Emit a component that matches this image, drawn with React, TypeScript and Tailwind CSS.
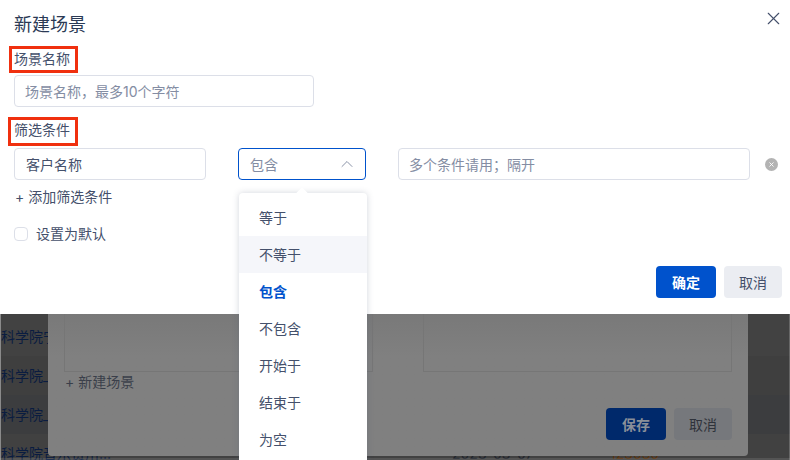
import React from 'react';
import { X, ChevronUp } from 'lucide-react';

const font = "font-['Inter','Noto_Sans_CJK_SC',sans-serif]";

const options = ['等于', '不等于', '包含', '不包含', '开始于', '结束于', '为空'];

const SceneDialog = () => (
  <div className="relative h-[314px] shrink-0 bg-white pt-[12px] pr-[8px] pl-[14px]">
    <h2 className="text-[18px] leading-[26px] font-normal text-[#2b3a55]">新建场景</h2>
    <button className="absolute top-[8px] left-[763px] text-[#44506b]">
      <X className="h-[21px] w-[21px]" strokeWidth={1.3} />
    </button>

    {/* 名称 */}
    <div className="mt-[10px] text-[14px] leading-[22px] text-[#44506b]">场景名称</div>
    <div className="mt-[5px] flex h-[32px] w-[300px] items-center rounded border border-[#dcdfe8] px-[10px] text-[14px] text-[#848da3]">
      场景名称，最多10个字符
    </div>

    {/* 筛选条件 */}
    <div className="mt-[12px] text-[14px] leading-[22px] text-[#44506b]">筛选条件</div>
    <div className="mt-[7px] flex items-center">
      <div className="flex h-[32px] w-[192px] shrink-0 items-center rounded border border-[#dcdfe8] px-[11px] text-[14px] text-[#44506b]">
        客户名称
      </div>
      <div className="ml-[32px] flex h-[32px] w-[128px] shrink-0 items-center justify-between rounded border border-[#0052cc] pr-[8px] pl-[11px] text-[14px] text-[#848da3]">
        包含
        <ChevronUp className="h-[20px] w-[20px] text-[#8a93a8]" strokeWidth={1.2} />
      </div>
      <div className="ml-[32px] flex h-[32px] w-[352px] shrink-0 items-center rounded border border-[#dcdfe8] px-[10px] text-[14px] text-[#848da3]">
        多个条件请用；隔开
      </div>
      <div className="ml-[15px] flex h-[13px] w-[13px] shrink-0 items-center justify-center rounded-full bg-[#b3b3b3] text-white">
        <X className="h-[7px] w-[7px]" strokeWidth={3} />
      </div>
    </div>

    <div className="mt-[6px] pl-[1px] text-[14px] leading-[22px] text-[#44506b]">+ 添加筛选条件</div>

    <label className="mt-[15px] flex items-center text-[14px] leading-[22px] text-[#44506b]">
      <span className="mr-[8px] h-[14px] w-[14px] rounded-sm border border-[#dcdfe8] bg-white" />
      设置为默认
    </label>

    <div className="mt-[21px] flex justify-end gap-[8px]">
      <button className="h-[32px] w-[60px] rounded bg-[#0052cc] text-[14px] font-bold text-white">确定</button>
      <button className="h-[32px] w-[58px] rounded bg-[#ebedf2] text-[14px] text-[#44506b]">取消</button>
    </div>

    {/* 红色标注框 */}
    <div className="absolute top-[46px] left-[9px] h-[27px] w-[69px] border-[3px] border-[#f0300f]" />
    <div className="absolute top-[117px] left-[8px] h-[29px] w-[70px] border-[3px] border-[#f0300f]" />
  </div>
);

// 弹窗后面被遮罩压暗的表格
const BackdropTable = () => (
  <div className="h-[146px] shrink-0 overflow-hidden border-l border-[#8a8a8a] text-[14px] leading-[22px] whitespace-nowrap text-[#0a1c40]">
    <div className="flex h-[42px] items-center bg-[#424242] pt-[3px]">科学院宁波</div>
    <div className="flex h-[39px] items-center bg-[#3f3f3f]">科学院_</div>
    <div className="flex h-[39px] items-center bg-[#3c3d3f]">科学院_</div>
    <div className="flex h-[39px] items-center bg-[#414141]">
      <span className="w-[451px] shrink-0">科学院音乐费用...</span>
      <span className="w-[158px] shrink-0 text-[#20242c]">2023-03-07</span>
      <span className="text-[#5a3410]">123030</span>
    </div>
  </div>
);

export default function App() {
  return (
    <div className={`relative flex h-[460px] w-[790px] flex-col overflow-hidden ${font}`}>
      <SceneDialog />
      <BackdropTable />
      <div className="absolute bottom-0 left-0 h-[2px] w-full bg-white/10" />
      <div className="absolute top-[314px] right-0 h-[146px] w-px bg-white/20" />

      {/* 背景弹窗 */}
      <div className="absolute top-[314px] left-[48px] h-[142px] w-[700px] rounded-b bg-linear-to-b from-[#797979] to-[#808080] to-[30%]">
        <div className="flex gap-[50px] px-[16px]">
          <div className="h-[58px] w-[309px] border-r border-b border-l border-[#767676]" />
          <div className="h-[58px] w-[309px] border-r border-b border-l border-[#767676]" />
        </div>
        <div className="mt-[-1px] pl-[17px] text-[14px] leading-[22px] text-[#3a3f4a]">+ 新建场景</div>
        <div className="mt-[15px] flex justify-end gap-[8px] pr-[16px]">
          <div className="flex h-[32px] w-[60px] items-center justify-center rounded bg-[#00296b] text-[14px] font-bold text-[#8a8f99]">保存</div>
          <div className="flex h-[32px] w-[58px] items-center justify-center rounded bg-[#76787c] text-[14px] text-[#2f333b]">取消</div>
        </div>
      </div>

      {/* 下拉菜单 */}
      <div className="absolute top-[193px] left-[239px] h-[280px] w-[128px] rounded bg-white pt-[6px] shadow-[0_0_6px_rgba(80,90,120,0.25)]">
        {options.map((o) => (
          <div
            key={o}
            className={`flex h-[37px] items-center pl-[20px] text-[14px] ${
              o === '不等于' ? 'bg-[#f5f6fa] text-[#44506b]' : o === '包含' ? 'font-bold text-[#0052cc]' : 'text-[#44506b]'
            }`}
          >
            {o}
          </div>
        ))}
      </div>
      <div className="absolute top-[189px] left-[298px] h-[8px] w-[8px] rotate-45 bg-white" />
    </div>
  );
}
